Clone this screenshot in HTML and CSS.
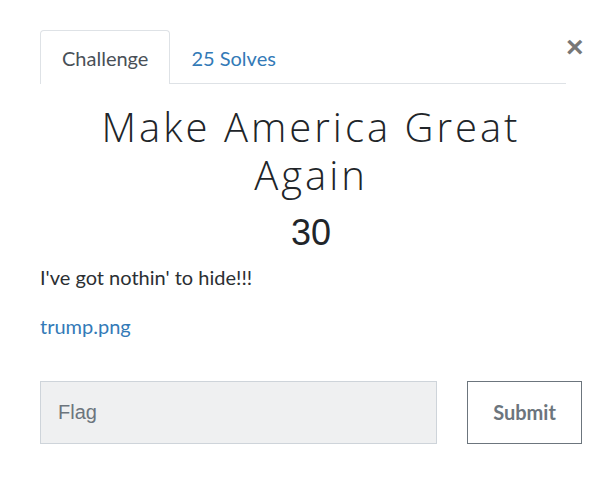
FILE: index.html
```html
<!DOCTYPE html>
<html lang="en">
<head>
    <meta charset="UTF-8">
    <title>Challenge</title>
    <link rel="stylesheet" href="styles.css">
</head>
<body>

<div class="modal">
    <div class="tab-row">
        <ul class="tabs">
            <li class="tab active">Challenge</li>
            <li class="tab">25 Solves</li>
        </ul>
        <span class="close">&times;</span>
    </div>

    <h1 class="title">Make America Great Again</h1>
    <div class="points">30</div>

    <p class="desc">I've got nothin' to hide!!!</p>
    <a class="file" href="#">trump.png</a>

    <div class="submit-row">
        <input type="text" class="flag" placeholder="Flag">
        <button class="submit">Submit</button>
    </div>
</div>

</body>
</html>
```

FILE: styles.css
```css
body {
    margin: 0;
    background: #ffffff;
    font-family: 'Lato', sans-serif;
    color: #212529;
}
.modal {
    padding: 30px 12px 0 40px;
}
.tab-row {
    display: flex;
    align-items: flex-start;
}
.tabs {
    display: flex;
    flex-shrink: 0;
    list-style: none;
    margin: 0;
    padding: 0;
    width: 526px;
    border-bottom: 1px solid #dee2e6;
}
.tab {
    padding: 0 21px;
    height: 52px;
    line-height: 55px;
    font-size: 20px;
    color: #337ab7;
    border: 1px solid transparent;
    border-bottom: none;
    border-radius: 4px 4px 0 0;
    margin-bottom: -1px;
}
.tab.active {
    color: #495057;
    border-color: #dee2e6;
    background: #fff;
    height: 53px;
}
.tab + .tab {
    padding-left: 20px;
}
.close {
    margin-top: 2px;
    font-family: 'Liberation Sans', sans-serif;
    font-size: 30px;
    font-weight: bold;
    color: #777;
    line-height: 30px;
}
.title {
    margin: 19px 0 0;
    text-align: center;
    font-family: 'Open Sans', sans-serif;
    font-weight: 300;
    font-size: 40px;
    line-height: 48px;
    letter-spacing: 3px;
    color: #212529;
}
.points {
    margin-top: 14px;
    text-align: center;
    font-family: 'Liberation Sans', sans-serif;
    font-size: 36px;
    line-height: 40px;
}
.desc {
    margin: 12px 0 0;
    font-size: 20px;
    line-height: 24px;
    color: #2b2f33;
}
.file {
    display: inline-block;
    margin-top: 25px;
    font-size: 20px;
    line-height: 24px;
    color: #337ab7;
    text-decoration: none;
}
.submit-row {
    display: flex;
    margin-top: 43px;
}
.flag {
    width: 397px;
    height: 63px;
    box-sizing: border-box;
    padding: 0 17px;
    background: #eff0f1;
    border: 1px solid #ced4da;
    font-family: 'Liberation Sans', sans-serif;
    font-size: 20px;
    outline: none;
}
.flag::placeholder {
    color: #6c757d;
}
.submit {
    margin-left: 30px;
    width: 115px;
    height: 63px;
    padding-bottom: 2px;
    background: #fff;
    border: 1px solid #6c757d;
    font-family: 'Lato', sans-serif;
    font-weight: bold;
    font-size: 20px;
    color: #6c757d;
}
```
